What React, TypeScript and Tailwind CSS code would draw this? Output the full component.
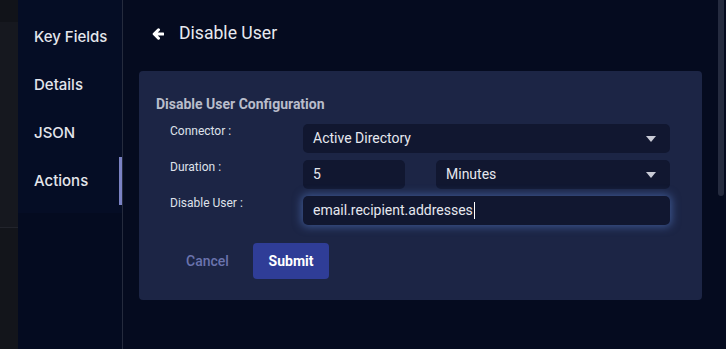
import React from 'react'

const inputCls = 'h-[29px] rounded-[5px] bg-[#111730] px-[10px] flex items-center text-[14px] text-[#e6e8ef]'
const labelCls = 'w-[133px] text-[12px] leading-[14px] text-[#dfe2ea]'

function Caret() {
  return (
    <svg width="10" height="6" viewBox="0 0 10 6" className="ml-auto mr-[4px]">
      <path d="M0 0 L10 0 L5 6 Z" fill="#c9cbd6" />
    </svg>
  )
}

const NAV = ['Key Fields', 'Details', 'JSON', 'Actions']

export default function App() {
  return (
    <div className="relative flex h-[349px] w-[726px] overflow-hidden bg-[#050b1f] font-['Roboto',sans-serif]">
      {/* left strip */}
      <div className="flex w-[18px] flex-col">
        <div className="h-[22px] bg-[#111319]" />
        <div className="h-[206px] border-b border-[#22242c] bg-[#16181f]" />
        <div className="flex-1 bg-[#13151b]" />
      </div>

      {/* sidebar */}
      <div className="flex w-[105px] flex-col border-r border-[#252b3d] bg-[#040b20]">
        <div className="bg-[#050d25] pt-[13px] pb-[8px]">
          {NAV.map(n => (
            <div key={n} className="relative flex h-[48px] items-center pl-[16px] font-['Inter',sans-serif] text-[15px] font-medium text-[#e4e6ec]">
              {n}
              {n === 'Actions' && <div className="absolute right-0 top-0 h-full w-[3px] bg-[#7b82c4]" />}
            </div>
          ))}
        </div>
      </div>

      {/* main */}
      <div className="flex-1 pl-[16px]">
        <div className="flex h-[71px] items-center pl-[13px] pb-[4px]">
          <svg width="12" height="12" viewBox="0 0 12 12">
            <path d="M6.5 1.8 L2.2 6 L6.5 10.2 M2.6 6 H11" stroke="#ffffff" strokeWidth="3" fill="none" strokeLinejoin="round" strokeLinecap="round" />
          </svg>
          <span className="ml-[15px] text-[17.6px] text-[#e8eaf0]">Disable User</span>
        </div>

        <div className="w-[563px] rounded-[4px] bg-[#1c2545] pt-[23px] pb-[21px] pl-[17px] pr-[32px]">
          <div className="text-[14px] font-bold text-[#b9bdcb]">Disable User Configuration</div>

          <div className="mt-[9px] flex flex-col gap-[7px] pl-[14px]">
            <div className="flex">
              <div className={labelCls}>Connector :</div>
              <div className={inputCls + ' flex-1'}>
                Active Directory
                <Caret />
              </div>
            </div>
            <div className="flex">
              <div className={labelCls}>Duration :</div>
              <div className={inputCls + ' w-[102px]'}>5</div>
              <div className={inputCls + ' ml-[31px] flex-1'}>
                Minutes
                <Caret />
              </div>
            </div>
            <div className="flex">
              <div className={labelCls}>Disable User :</div>
              <div className={inputCls + ' flex-1 shadow-[0_0_8px_2px_rgba(90,130,210,0.5)]'}>
                email.recipient.addresses
                <span className="ml-[1px] inline-block h-[17px] w-[1px] bg-white" />
              </div>
            </div>
          </div>

          <div className="mt-[18px] flex gap-[8px] pl-[14px]">
            <button className="h-[36px] w-[75px] rounded-[4px] text-[14px] font-medium text-[#6a73ad]">Cancel</button>
            <button className="h-[36px] w-[76px] rounded-[4px] bg-[#2f3d97] text-[14px] font-bold text-white">Submit</button>
          </div>
        </div>
      </div>

      {/* scrollbar */}
      <div className="absolute right-[2px] top-0 h-[196px] w-[6px] rounded-b-[3px] bg-[#252b3f]" />
    </div>
  )
}
